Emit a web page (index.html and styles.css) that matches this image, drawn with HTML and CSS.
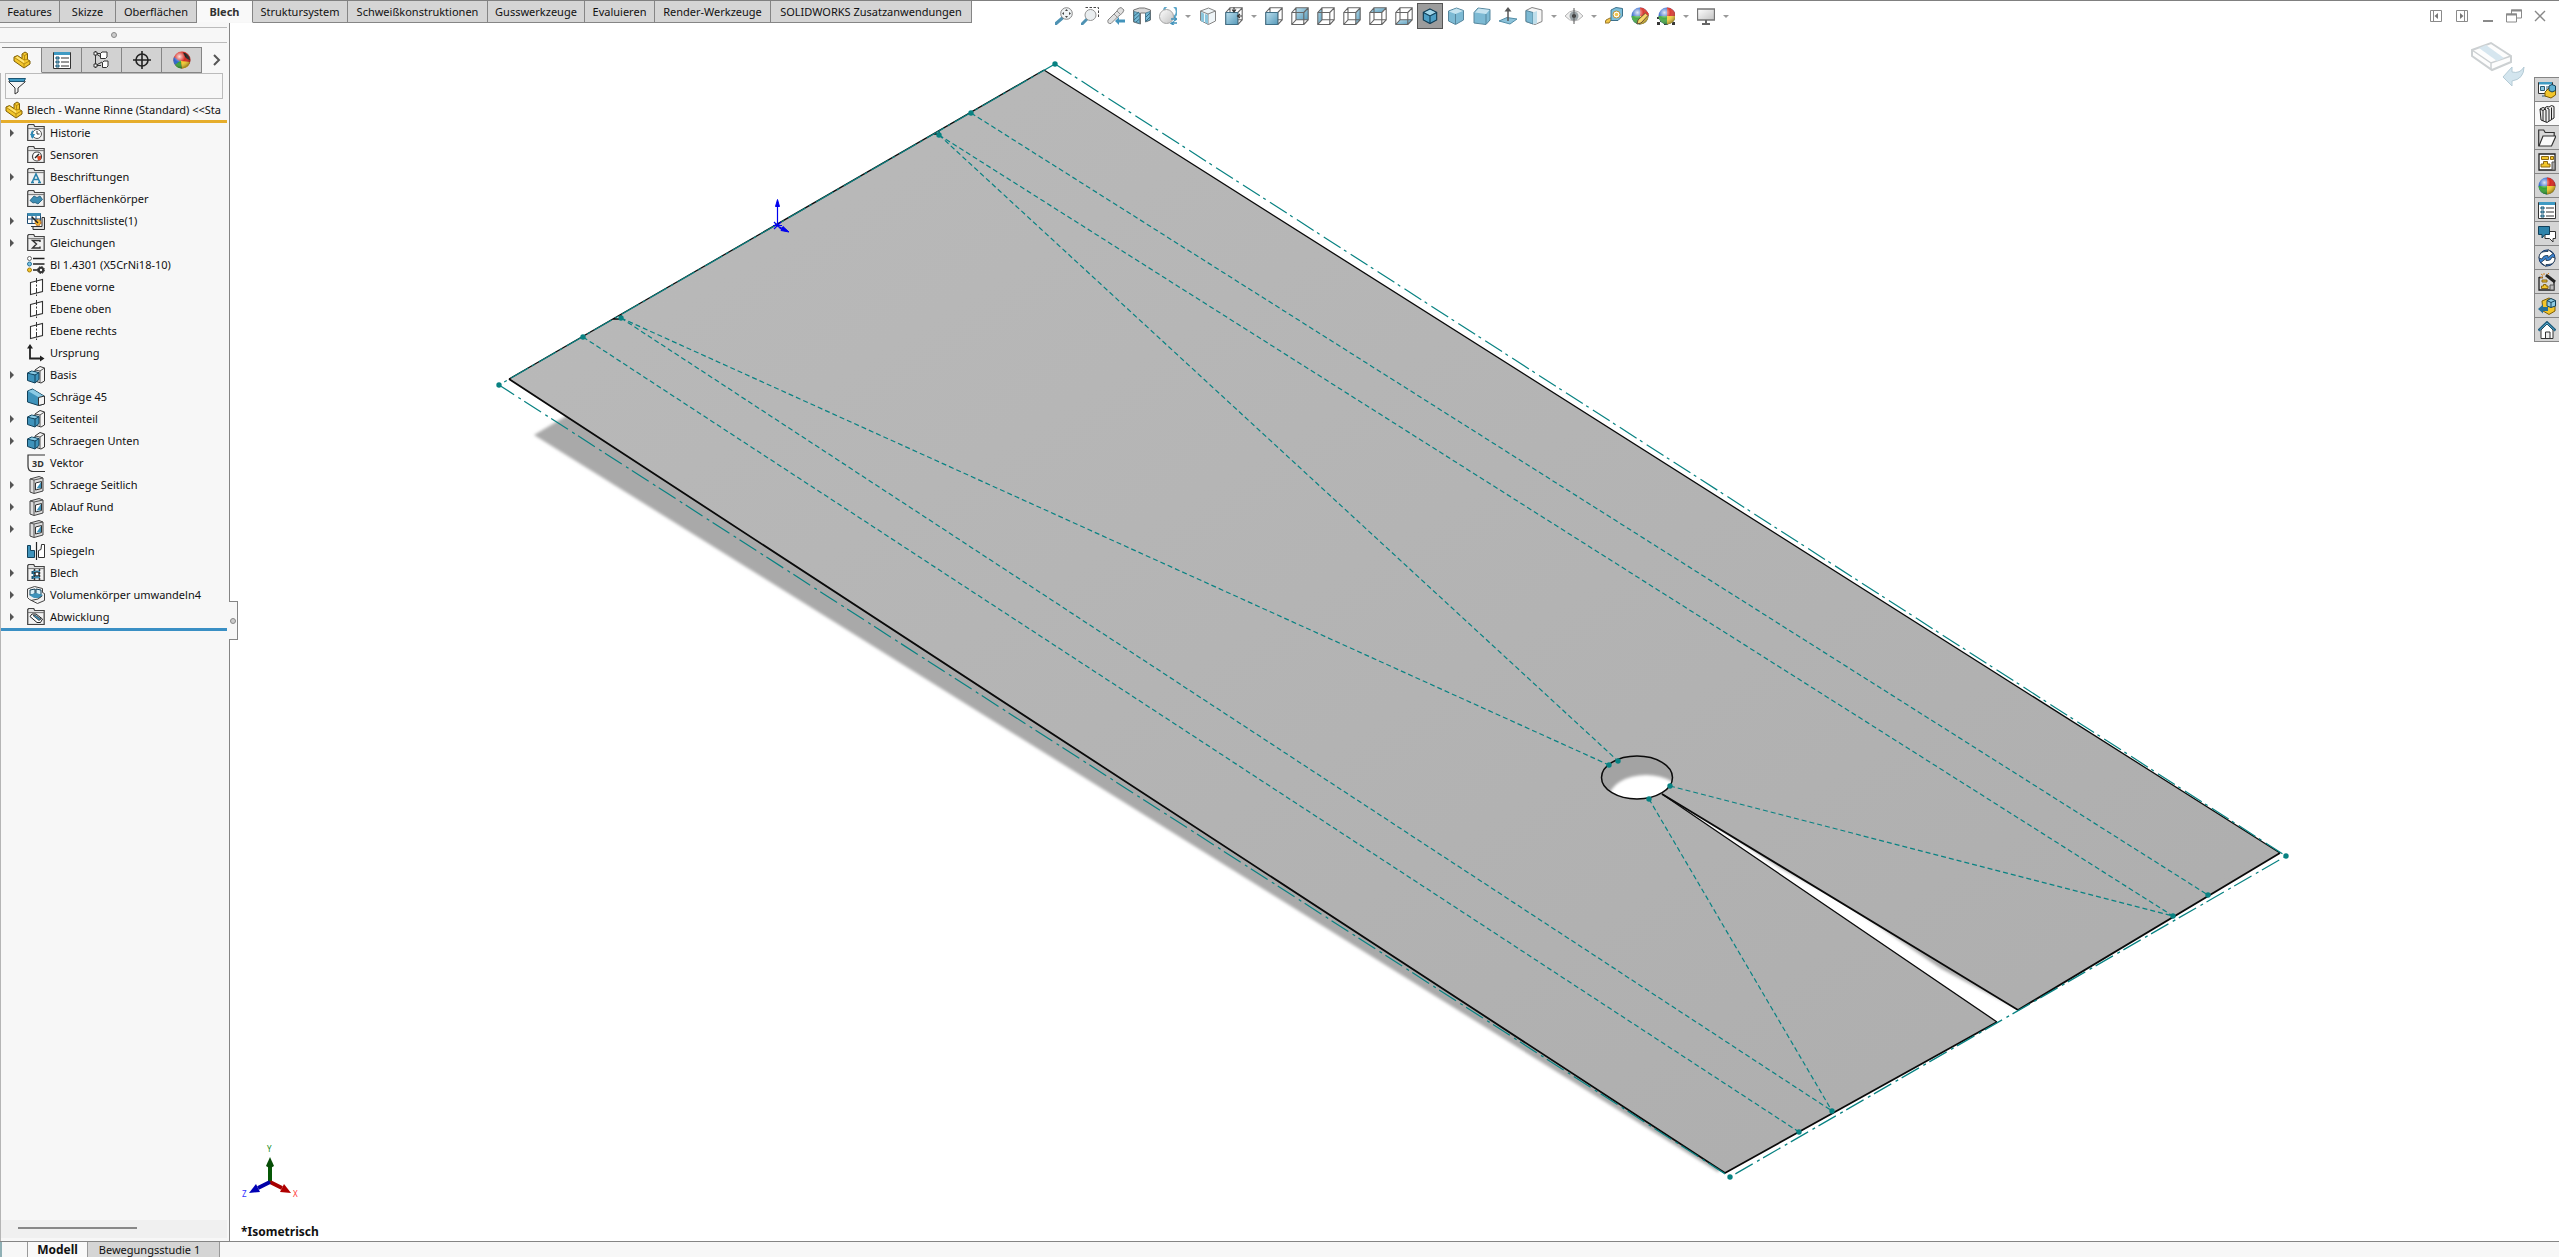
FILE: index.html
```html
<!DOCTYPE html>
<html lang="de">
<head>
<meta charset="utf-8">
<title>Blech - Wanne Rinne</title>
<link rel="stylesheet" href="styles.css">
</head>
<body>
<svg class="defs" aria-hidden="true">
  <defs>
    <linearGradient id="blue" x1="0" y1="0" x2="1" y2="1"><stop offset="0" stop-color="#b5dcec"/><stop offset="1" stop-color="#4590b4"/></linearGradient>
    <linearGradient id="grey" x1="0" y1="0" x2="1" y2="1"><stop offset="0" stop-color="#fff"/><stop offset="1" stop-color="#bbb"/></linearGradient>
    <linearGradient id="sheet" x1="0" y1="0" x2="1" y2="1"><stop offset="0" stop-color="#bababa"/><stop offset="1" stop-color="#adadad"/></linearGradient>
    <radialGradient id="shine" cx=".35" cy=".3" r=".7"><stop offset="0" stop-color="#fff" stop-opacity=".85"/><stop offset=".5" stop-color="#fff" stop-opacity="0"/><stop offset="1" stop-color="#000" stop-opacity=".35"/></radialGradient>
    <filter id="soft" x="-5%" y="-5%" width="110%" height="110%"><feGaussianBlur stdDeviation="1.5"/></filter>
    <clipPath id="holeclip"><ellipse cx="1637" cy="777.5" rx="35.5" ry="21.5"/></clipPath>
    <clipPath id="slitclip"><path d="M1662 794 2018 1010 1997 1022Z"/></clipPath>
  </defs>
  <symbol id="part" viewBox="0 0 18 18"><path d="M1 6 4.500 4.500 9 7.500V3L12 1l2.500 1.500v6L17 10v3l-6 4L1 10Z" fill="#f3c62b" stroke="#7d5d05"/><path d="M1.500 6.500 11 13l5.500-3M11 13v4M9 7.500l2.500 1.500 3-1M9 3l2.500 1.500 3-1.500M11.500 4.500V9" fill="none" stroke="#a67c0c" stroke-width=".8"/><path d="m2.500 6.500 2-1L11 10v2Z" fill="#ffe57a"/></symbol>
  <symbol id="props" viewBox="0 0 18 18"><path d="M.5 1.500h17v16H.5Z" fill="#fff" stroke="#333"/><path d="M1 1h16v3H1Z" fill="#3f9ac3"/><path d="M3 6h3v2H3Zm0 4h3v2H3Zm0 4h3v2H3Z" fill="#8cc8e0" stroke="#1c5674"/><path d="M8 7h8M8 11h8M8 15h8" stroke="#333" stroke-width="1.200"/></symbol>
  <symbol id="config" viewBox="0 0 18 18"><path d="M2.500 0v17M2.500 2.500H8M2.500 14.500H8M2.500 2.500 8 6M2.500 14.500 9 11" fill="none" stroke="#333"/><path d="M7.500 2.500 9 1h5v5l-1.500 1.500h-5ZM9.500 11.500 11 10h4v5l-1.500 1.500h-4Z" fill="#fff" stroke="#333"/><path d="M1 1h3v3H1Zm0 12h3v3H1Z" fill="#fff" stroke="#333"/></symbol>
  <symbol id="target" viewBox="0 0 18 18"><circle cx="9" cy="9" r="6" fill="none" stroke="#222" stroke-width="1.600"/><path d="M9 0v18M0 9h18" stroke="#222" stroke-width="1.600"/></symbol>
  <symbol id="ball" viewBox="0 0 18 18"><circle cx="9" cy="9" r="8.500" fill="#2c62c9"/><path d="M9 9V.5A8.500 8.500 0 0 1 17.500 9Z" fill="#d7281f"/><path d="M9 9h8.500A8.500 8.500 0 0 1 9 17.500Z" fill="#f3cb2c"/><path d="M9 9v8.500A8.500 8.500 0 0 1 .5 9Z" fill="#37a336"/><circle cx="9" cy="9" r="8.500" fill="url(#shine)"/></symbol>
  <symbol id="ballcut" viewBox="0 0 18 18"><circle cx="9" cy="9" r="8.500" fill="#d7281f"/><path d="M1 6a8.500 8.500 0 0 0 1 8l6-3Z" fill="#2c62c9"/><path d="M8 9 2 14a8.500 8.500 0 0 0 7 3.500Z" fill="#37a336"/><path d="M8 10 9 17.500A8.500 8.500 0 0 0 17 11Z" fill="#f3cb2c"/><path d="M10 1.500A8 8 0 0 1 17 9Q12 8 10 1.500Z" fill="#222"/><circle cx="9" cy="9" r="8.500" fill="url(#shine)"/></symbol>
  <symbol id="funnel" viewBox="0 0 18 18"><path d="M1 4v1l6 6v6l3-2v-4l7-6V4Z" fill="#f5f5f5" stroke="#333"/><path d="M.5 1.500h17L16 4.500H2Z" fill="#3f9ac3" stroke="#1c5674"/></symbol>
  <symbol id="folder" viewBox="0 0 18 18"><path d="M.7 16.500v-15l1-1h5l1 2h9.500v14Z" fill="#e2e2e2" stroke="#444" stroke-width="1.200"/><path d="M1 4.500h16" stroke="#666" stroke-width=".8"/><path d="M2 6h14v9H2Z" fill="#f2f2f2"/></symbol>
  <symbol id="history" viewBox="0 0 18 18"><use href="#folder"/><circle cx="10" cy="10" r="4.500" fill="#fff" stroke="#555"/><path d="M10 7v3h2.500" fill="none" stroke="#333"/><path d="M6 14A5 5 0 0 1 6 7" fill="none" stroke="#2f8bb8" stroke-width="1.800"/><path d="m3 10 3 4 2-4Z" fill="#2f8bb8"/></symbol>
  <symbol id="sensor" viewBox="0 0 18 18"><use href="#folder"/><circle cx="10" cy="10.500" r="4.500" fill="#fff" stroke="#444" stroke-width="1.200"/><path d="m10 10.500 4-1v4l-3 1Z" fill="#e04a28"/><path d="m8 12 4-4" stroke="#222" stroke-width="1.400"/></symbol>
  <symbol id="notes" viewBox="0 0 18 18"><use href="#folder"/><path d="m5 14.500 4-8.500 4 8.500M6.500 11.500h5M4 14.500h3M11 14.500h3" fill="none" stroke="#2a83ad" stroke-width="1.600"/></symbol>
  <symbol id="surfaces" viewBox="0 0 18 18"><use href="#folder"/><path d="M3 10.500 7 6l3 1.500L13 6l2.500 3.500L11 14l-3-1.500-2 .5Z" fill="#3d8db3" stroke="#1c5674" stroke-width=".8"/></symbol>
  <symbol id="cutlist" viewBox="0 0 18 18"><path d="M.5 1.500h13v10H.5Z" fill="#fff" stroke="#1e4a70"/><path d="M.5 1h13v3H.5Z" fill="#3d8db3"/><path d="M.5 7h13M5 4v8M9 4v8" stroke="#1e4a70"/><path d="M4 14.500h11v-9h2.500v12H6v-3" fill="#ddd" stroke="#333"/><circle cx="11" cy="10.500" r="3" fill="#f2b632" stroke="#b04f10" stroke-dasharray="1.500 1"/><path d="m5 5 6 6" stroke="#222" stroke-width="1.500"/></symbol>
  <symbol id="equation" viewBox="0 0 18 18"><use href="#folder"/><path d="M13 8V6.500H5.500L9.500 10l-4 4H13v-1.500" fill="none" stroke="#333" stroke-width="1.400"/></symbol>
  <symbol id="material" viewBox="0 0 18 18"><path d="M6 2.500h11.500M6 8h11.500M6 14h5" stroke="#222" stroke-width="1.600"/><circle cx="2.500" cy="2.500" r="2" fill="#fff" stroke="#666"/><circle cx="2.500" cy="8" r="2" fill="#7cc3e2" stroke="#25719a"/><circle cx="2.500" cy="14" r="2" fill="#f3c62b" stroke="#a67c0c"/><circle cx="14" cy="14" r="2.200" fill="none" stroke="#333" stroke-width="2"/><circle cx="14" cy="14" r="3.500" fill="none" stroke="#333" stroke-dasharray="1.500 1.250"/></symbol>
  <symbol id="plane" viewBox="0 0 18 18"><path d="m3.500 4.500 12-3v12l-12 3Z" fill="#fff" stroke="#333" stroke-width="1.100"/><path d="M9.500 0v18" stroke="#333" stroke-dasharray="5 1.500 2 1.500"/></symbol>
  <symbol id="origin" viewBox="0 0 18 18"><path d="M3 2v12.500h12" fill="none" stroke="#222" stroke-width="1.800"/><path d="M0 4.500 3 0l3 4.500ZM13 11.500l4.500 3-4.500 3Z" fill="#222"/></symbol>
  <symbol id="extrude" viewBox="0 0 18 18"><path d="m8 4 5-3.500 4.500 1.500v13L14 17 8 15Z" fill="#f4f4f4" stroke="#333"/><path d="m8 4 5 1 4.500-3M13 5v11" fill="none" stroke="#555"/><path d="m.5 7 4-2 7.500 1.500v7L8 17 .5 14.500Z" fill="#3f93bb" stroke="#12415a"/><path d="M.5 7 8 9l4-2.500M8 9v8" fill="none" stroke="#12415a"/><path d="m2 7 3-1.500L10.500 7 8 8.300Z" fill="#8fcbe3"/></symbol>
  <symbol id="bevel" viewBox="0 0 18 18"><path d="m.5 3 5-2L17 8v8l-5.500 1.500L.5 14Z" fill="#3f93bb" stroke="#12415a"/><path d="m1 3 5-1.500L16.500 8 12 9.500Z" fill="#8ccbe5"/><path d="M11.500 9.500 17.500 8v8l-6 1.500Z" fill="#f4f4f4" stroke="#333"/></symbol>
  <symbol id="cut" viewBox="0 0 18 18"><path d="m3 3 9-2.500 4 1.500v13L7 17.500 3 16Z" fill="#ddd" stroke="#444"/><path d="M3 3l4 1 9-2M7 4v13" fill="none" stroke="#555"/><path d="m8.500 7 6-1.500v7l-6 1.500Z" fill="#fff" stroke="#333"/><path d="M9.500 12.500 14 6v6Z" fill="#3f93bb"/></symbol>
  <symbol id="mirror" viewBox="0 0 18 18"><path d="M.5 3.500h3v5h4v7h-7Z" fill="#3f93bb" stroke="#12415a"/><path d="M9.500 0v18" stroke="#222" stroke-width="1.200"/><path d="M17.500 2.500h-3l-.5 5-2.500 1v7h6Z" fill="#fff" stroke="#333"/></symbol>
  <symbol id="metal" viewBox="0 0 18 18"><use href="#folder"/><path d="M6 6.500h7v8H6Z" fill="#3f93bb"/><path d="M7.500 5v11M12.500 5v11" stroke="#333" stroke-width="1.500" stroke-dasharray="2 1"/><circle cx="10" cy="10" r="2" fill="#fff" stroke="#222"/><path d="M4.500 7h2v3h-2Zm0 5h2v3h-2Z" fill="#1c5674"/></symbol>
  <symbol id="convert" viewBox="0 0 18 18"><path d="m.5 3 7-2.500 8 2v4l2 1v7l-7 3-8-4-2-2Z" fill="#f0f0f0" stroke="#444"/><path d="m3 4 5-1v5L3 9Zm6-1 5 1v5L9 8Z" fill="#d9eef6" stroke="#12415a"/><path d="m2 9 7-2 7 2-3 3H7Z" fill="#3f93bb"/><path d="M4 14.500 11 13l4-3" fill="none" stroke="#444"/></symbol>
  <symbol id="flat" viewBox="0 0 18 18"><use href="#folder"/><path d="m3 8.500 2-2.500h4l6.500 5-2 3.500H10Z" fill="#fff" stroke="#222"/><path d="m6 7.500 6 5 2-1.500-6-4Z" fill="#3f93bb" stroke="#222" stroke-width=".7"/></symbol>

  <symbol id="zfit" viewBox="0 0 18 18"><path d="m1 16.500 7-6" stroke="#3b87ab" stroke-width="3.200" stroke-linecap="round"/><circle cx="11.500" cy="6.500" r="5.800" fill="#eef2f4" stroke="#777"/><path d="m11.500 2 1.500 2h-3Zm0 9 1.500-2h-3ZM7 6.500l2-1.500v3Zm9 0-2-1.500v3Z" fill="#333"/></symbol>
  <symbol id="zarea" viewBox="0 0 18 18"><path d="M4.500.5h13v11" fill="none" stroke="#333" stroke-dasharray="2.500 1.500"/><path d="m1 17 5-5" stroke="#3b87ab" stroke-width="3" stroke-linecap="round"/><circle cx="9.500" cy="8" r="5.500" fill="#e8edef" stroke="#888"/></symbol>
  <symbol id="prev" viewBox="0 0 18 18"><path d="m1 13 9-9 1.500-2.500L14 .5 17 3l-1.500 3-5 4L4 16.500Q0 17 1 13Z" fill="#ddd" stroke="#777"/><path d="m10 4 4 4M7 7l4 4" stroke="#888"/><path d="m8 14 4-4v2.500h6v3h-6V18Z" fill="#2e88b4"/></symbol>
  <symbol id="section" viewBox="0 0 18 18"><path d="m.5 3 6-2 5 0 6 2v10l-5 2V6h-5v11l-7-2Z" fill="#d5d5d5" stroke="#666"/><path d="M1 4.500 6.500 6v10.500L1 14.500ZM12.500 6l4.500-1.500V13l-4.500 1.500Z" fill="#63b2d2" stroke="#275d77" stroke-width=".7"/><path d="m1 9 5-4M1 13l5.500-5M3 15l3.500-3M13 10l4-4M13 14l4-4" stroke="#275d77"/></symbol>
  <symbol id="style" viewBox="0 0 18 18"><path d="M5 3a6.500 6.500 0 1 1 10 7" fill="none" stroke="#4b9ec4" stroke-width="2"/><circle cx="7.500" cy="9.500" r="7" fill="url(#grey)" stroke="#999"/><path d="M12 12h6M15 10l3 2-3 2M18 16h-6M15 14.500 12 16.500l3 1.500" fill="none" stroke="#2e88b4" stroke-width="1.300"/></symbol>
  <symbol id="orient" viewBox="0 0 18 18"><path d="m1.500 4 8-3 7 3v10l-7 3.500-8-4Z" fill="#eef5f8" stroke="#777"/><path d="M1.500 4 9 7l7.500-3M9 7v10.500" fill="none" stroke="#777"/><path d="m2 5 3 1.500v9L2 14Zm4 2 3 1v9l-3-1.500Z" fill="#7fbfd9"/></symbol>
  <symbol id="wire" viewBox="0 0 18 18"><path d="M.8 5.500h12v12H.8ZM5 .8h12.200v12H5ZM.8 5.500 5 .8M12.800 5.500 17.200.8M12.800 17.500l4.400-4.700M.8 17.500 5 12.800" fill="none" stroke="#555" stroke-width="1.100"/></symbol>
  <symbol id="vfront" viewBox="0 0 18 18"><use href="#wire"/><path d="M.8 5.500h12v12H.8Z" fill="url(#blue)" stroke="#2b607a"/></symbol>
  <symbol id="vback" viewBox="0 0 18 18"><path d="M5 .8h12.200v12H5Z" fill="url(#blue)"/><use href="#wire"/></symbol>
  <symbol id="vleft" viewBox="0 0 18 18"><path d="M.8 5.500 5 .8v12L.8 17.500Z" fill="url(#blue)"/><use href="#wire"/></symbol>
  <symbol id="vright" viewBox="0 0 18 18"><path d="M12.800 5.500 17.200.8v12l-4.400 4.700Z" fill="url(#blue)"/><use href="#wire"/></symbol>
  <symbol id="vtop" viewBox="0 0 18 18"><path d="M.8 5.500 5 .8h12.200l-4.400 4.700Z" fill="url(#blue)"/><use href="#wire"/></symbol>
  <symbol id="vbottom" viewBox="0 0 18 18"><path d="M.8 17.500 5 12.800h12.200l-4.400 4.700Z" fill="url(#blue)"/><use href="#wire"/></symbol>
  <symbol id="viewsel" viewBox="0 0 18 18"><use href="#vfront"/><path d="M9 4V.5M7 2.500 9 5l2-2.500M17 9h-4M15 7l-2.500 2 2.500 2" fill="none" stroke="#222" stroke-width="1.200"/></symbol>
  <symbol id="iso" viewBox="0 0 18 18"><path d="m9 1 7.500 4v8.500L9 17.500l-7.500-4V5Z" fill="#4d9fc5" stroke="#0f3d55" stroke-width="1.300"/><path d="m9 2 6.500 3L9 8.500 2.500 5Z" fill="#a4d7ea"/><path d="M1.500 5 9 9l7.500-4M9 9v8" fill="none" stroke="#0f3d55" stroke-width="1.200"/></symbol>
  <symbol id="dim" viewBox="0 0 18 18"><path d="m1.500 4 8-3 7 2.500V13L8.500 17.500l-7-3.500Z" fill="#6fb3d0" stroke="#457a93"/><path d="m2 4.500 7.500-3L16 4 8.500 7Z" fill="#c0e1ee"/><path d="M8.500 7v10" stroke="#457a93"/></symbol>
  <symbol id="tri" viewBox="0 0 18 18"><path d="m1 5.500 4-4.500L17 2.500V13l-4 4.500L1 16Z" fill="#6fb3d0" stroke="#457a93"/><path d="m2 5.500 3.500-4 11 1.500L13 7Z" fill="#c0e1ee"/><path d="M13 7v10" stroke="#457a93"/></symbol>
  <symbol id="normal" viewBox="0 0 18 18"><path d="m0 14 8-3.500L18 12l-7 5Z" fill="#7fbcd6" stroke="#40819e"/><path d="M9 14V3" stroke="#444" stroke-width="1.500"/><path d="M5.500 4.500 9 0l3.500 4.500Z" fill="#444"/></symbol>
  <symbol id="clipview" viewBox="0 0 18 18"><path d="m1 3.500 6-3L17 3v11.500l-7 3-9-3Z" fill="#f4f4f4" stroke="#777"/><path d="m1 3.500 7 2V17l-7-2.500Z" fill="#6fb3d0" stroke="#457a93"/><path d="M8 5.500 12 4v12.500L8 17Z" fill="#b8dbe9"/></symbol>
  <symbol id="eye" viewBox="0 0 18 18"><path d="M0 9q9-11 18 0-9 10-18 0Z" fill="#eee" stroke="#aaa"/><circle cx="9" cy="9" r="4.500" fill="#8e989d"/><circle cx="9" cy="9" r="2" fill="#222"/><path d="M9 1v16" stroke="#444"/></symbol>
  <symbol id="tape" viewBox="0 0 18 18"><path d="m0 16 1-3 4-2h4v2H6l-2 3Z" fill="#f2c137" stroke="#8b6714"/><path d="m6 3 5-2.500 6.500 1V9L13 13.500H6Z" fill="#6fb9d8" stroke="#27627f"/><circle cx="11.500" cy="7.500" r="3.500" fill="#fff" stroke="#b5851b"/><circle cx="11.500" cy="7.500" r="1.800" fill="#f2c137"/></symbol>
  <symbol id="appear" viewBox="0 0 18 18"><svg width="16" height="16" viewBox="0 0 18 18"><use href="#ball"/></svg><path d="m6 17 1-4 7.500-7 2.500 2.500-7 7.500Z" fill="#f7d35b" stroke="#5a3b1d"/><path d="m14.500 6 1.500-1.500L18 7l-1 1.500Z" fill="#d7281f"/></symbol>
  <symbol id="scene" viewBox="0 0 18 18"><path d="M0 10h18v8H0Z" fill="#222"/><path d="M0 12h3v3H0Zm3 3h4v3H3Zm8 0h4v3h-4Zm4-3h3v3h-3Zm-8 0h4v3H7Z" fill="#fff"/><svg x="1" width="16" height="16" viewBox="0 0 18 18"><use href="#ball"/></svg></symbol>
  <symbol id="screen" viewBox="0 0 18 18"><path d="M.5 2h17v11H.5Z" fill="url(#grey)" stroke="#666" stroke-width="1.300"/><path d="M9 13v4M5 17h8" stroke="#555" stroke-width="2"/></symbol>

  <symbol id="wleft" viewBox="0 0 12 12"><path d="M.5.5h11v11H.5ZM3.500.5v11" fill="none" stroke="#8a8a8a"/><path d="M8 3v6L4.500 6Z" fill="#777"/></symbol>
  <symbol id="wright" viewBox="0 0 12 12"><path d="M.5.5h11v11H.5ZM8.500.5v11" fill="none" stroke="#8a8a8a"/><path d="M4 3v6l3.500-3Z" fill="#777"/></symbol>
  <symbol id="wmin" viewBox="0 0 12 12"><path d="M1 11h10" stroke="#8a8a8a" stroke-width="2"/></symbol>
  <symbol id="wrest" viewBox="0 0 16 14"><path d="M.5 5h10v8H.5ZM5.500 5V1h10v8h-5" fill="none" stroke="#8a8a8a"/><path d="M5 1.500h11M0 5.500h11" stroke="#8a8a8a" stroke-width="2"/></symbol>
  <symbol id="wclose" viewBox="0 0 12 12"><path d="m1 1 10 10M11 1 1 11" stroke="#888" stroke-width="1.400"/></symbol>

  <symbol id="tres" viewBox="0 0 18 18"><path d="M.5 1.500h14v11H.5Z" fill="#fff" stroke="#333"/><path d="M1 1h13v2.500H1Z" fill="#3f9ac3"/><path d="M2.500 5.500h4v4h-4ZM8 6h5M8 8h4M4 15h6" fill="#8cc8e0" stroke="#2c5b75"/><path d="m7 11 5-5 5.500 1v7L13 17l-6-2Z" fill="#f3c62b" stroke="#7d5d05"/><path d="m11 5 3-1.500L17.500 5v4.500L14 11l-3-1.500Z" fill="#63b2d2" stroke="#12415a"/></symbol>
  <symbol id="books" viewBox="0 0 18 18"><path d="m2 4 3-1.500L6.500 3 9 1.500l2 .5L13.500.5 16 1.500V13l-7 4.500L3 15Z" fill="#eee" stroke="#222"/><path d="m2 4 3 1.500v10.500M5 5.500l3-2v0M8 5v12M8 5 6 3.500M11 4v12M11 4 9 3M13.500 2.500v12" fill="none" stroke="#222"/></symbol>
  <symbol id="open" viewBox="0 0 18 18"><path d="M.7 17V1h5l1.500 2.500h9V7" fill="#d9d9d9" stroke="#333" stroke-width="1.200"/><path d="m1 17 4-10h13l-4.500 10Z" fill="#fafafa" stroke="#333" stroke-width="1.200"/></symbol>
  <symbol id="palette" viewBox="0 0 18 18"><path d="M1 1h16v16H1Z" fill="#fff" stroke="#222" stroke-width="1.300"/><path d="M3.500 3.500h7v3h-7ZM12.500 3.500h3v3h-3ZM5.500 8.500h4v2.500H12v3H3V11h2.500Z" fill="#f3c62b" stroke="#8b6714"/><path d="M14 9h3v8h-3Z" fill="#aaa" stroke="#555"/></symbol>
  <symbol id="chat" viewBox="0 0 18 18"><path d="M7 6.500h10.500v7H15v3.500l-3.500-3.500H7Z" fill="#fff" stroke="#333"/><path d="M.5 1.500h11v8H7L4 13V9.500H.5Z" fill="#2f84ab" stroke="#12415a"/></symbol>
  <symbol id="sync" viewBox="0 0 18 18"><circle cx="9" cy="9" r="8" fill="#3b83cf" stroke="#173b70"/><path d="M1 9Q1 2.500 8 2.500h2V.5l5 4-5 4v-2H8Q5 6.500 4 10ZM17 9q0 6.500-7 6.500H8v2l-5-4 5-4v2h2q3 0 4-3.500Z" fill="#fff" stroke="#234" stroke-width=".8"/></symbol>
  <symbol id="wand" viewBox="0 0 18 18"><path d="M1 4.500h4M1 4v13h15V9" fill="none" stroke="#222" stroke-width="1.300"/><path d="M4 7h5v2H4ZM5.500 11.500H8V13h2v2.500H3.500V13h2Z" fill="#f3c62b" stroke="#8b6714"/><path d="m8 2 9 7" stroke="#222" stroke-width="3"/><path d="m3 1 2 1.500M6 0v2M11 0 9.500 1.500M2 5l3-1" stroke="#cf8120"/><path d="M12 12h4v5h-4Z" fill="#bbb" stroke="#555"/></symbol>
  <symbol id="export" viewBox="0 0 18 18"><path d="m4 4 7-3 6 3v10l-6 3.500L5 14Z" fill="#f3c62b" stroke="#7d5d05"/><path d="m9 3.500 4-2 4.500 2V9L13 10.500 9 9Z" fill="#8fcbe3" stroke="#12415a"/><path d="M9 3.500 13 5.500l4.500-2M13 5.500v5" fill="none" stroke="#12415a"/><path d="m0 12 5-4.500V10h5v4H5v2.500Z" fill="#256f97"/></symbol>
  <symbol id="home" viewBox="0 0 18 18"><path d="M3 9v8.500h12V9L9 3Z" fill="#fff" stroke="#333"/><path d="M7.500 17v-6H12v6" fill="#eee" stroke="#333"/><path d="m.5 9.500 8.500-8 8.500 8" fill="none" stroke="#1b5b7c" stroke-width="2.600"/><path d="m1.500 9 7.500-7 7.500 7" fill="none" stroke="#59acd0"/></symbol>
</svg>

<header class="top">
  <nav class="commands" aria-label="Befehle">
    <button>Features</button><button>Skizze</button><button>Oberflächen</button><button class="on">Blech</button><button>Struktursystem</button><button>Schweißkonstruktionen</button><button>Gusswerkzeuge</button><button>Evaluieren</button><button>Render-Werkzeuge</button><button>SOLIDWORKS Zusatzanwendungen</button>
  </nav>
  <div class="hud">
    <button aria-label="In Fenster zoomen"><svg><use href="#zfit"/></svg></button>
    <button aria-label="Ausschnitt vergrößern"><svg><use href="#zarea"/></svg></button>
    <button aria-label="Vorherige Ansicht"><svg><use href="#prev"/></svg></button>
    <button aria-label="Schnittansicht"><svg><use href="#section"/></svg></button>
    <button aria-label="Ansichtsstil"><svg><use href="#style"/></svg></button><i class="caret"></i>
    <button aria-label="Ausrichtung"><svg><use href="#orient"/></svg></button>
    <button aria-label="Ansichtsauswahl"><svg><use href="#viewsel"/></svg></button><i class="caret"></i>
    <button aria-label="Vorne"><svg><use href="#vfront"/></svg></button>
    <button aria-label="Hinten"><svg><use href="#vback"/></svg></button>
    <button aria-label="Links"><svg><use href="#vleft"/></svg></button>
    <button aria-label="Rechts"><svg><use href="#vright"/></svg></button>
    <button aria-label="Oben"><svg><use href="#vtop"/></svg></button>
    <button aria-label="Unten"><svg><use href="#vbottom"/></svg></button>
    <button aria-label="Isometrisch" class="on"><svg><use href="#iso"/></svg></button>
    <button aria-label="Dimetrisch"><svg><use href="#dim"/></svg></button>
    <button aria-label="Trimetrisch"><svg><use href="#tri"/></svg></button>
    <button aria-label="Normal auf"><svg><use href="#normal"/></svg></button>
    <button aria-label="Bildanzeige"><svg><use href="#clipview"/></svg></button><i class="caret"></i>
    <button aria-label="Ausblenden"><svg><use href="#eye"/></svg></button><i class="caret"></i>
    <button aria-label="Messen"><svg><use href="#tape"/></svg></button>
    <button aria-label="Erscheinungsbild"><svg><use href="#appear"/></svg></button>
    <button aria-label="Bühne"><svg><use href="#scene"/></svg></button><i class="caret"></i>
    <button aria-label="Anzeige"><svg><use href="#screen"/></svg></button><i class="caret"></i>
  </div>
  <div class="window">
    <button aria-label="Links andocken"><svg><use href="#wleft"/></svg></button>
    <button aria-label="Rechts andocken"><svg><use href="#wright"/></svg></button>
    <button aria-label="Minimieren"><svg><use href="#wmin"/></svg></button>
    <button aria-label="Wiederherstellen"><svg class="wide"><use href="#wrest"/></svg></button>
    <button aria-label="Schließen"><svg><use href="#wclose"/></svg></button>
  </div>
</header>

<main class="work">
  <aside class="side">
    <div class="grip"><i class="dot"></i></div>
    <div class="managers">
      <button class="on" aria-label="FeatureManager"><svg><use href="#part"/></svg></button>
      <button aria-label="PropertyManager"><svg><use href="#props"/></svg></button>
      <button aria-label="ConfigurationManager"><svg><use href="#config"/></svg></button>
      <button aria-label="DimXpertManager"><svg><use href="#target"/></svg></button>
      <button aria-label="DisplayManager"><svg><use href="#ballcut"/></svg></button>
      <button class="more" aria-label="Mehr"><svg viewBox="0 0 18 18"><path d="m9 4 5 5-5 5" fill="none" stroke="#555" stroke-width="2"/></svg></button>
    </div>
    <div class="panel">
      <label class="filter"><svg><use href="#funnel"/></svg><input type="text" aria-label="Filter"></label>
      <div class="root"><svg><use href="#part"/></svg><span>Blech - Wanne Rinne (Standard) &lt;&lt;Sta</span></div>
      <ul class="tree">
        <li class="kids"><svg><use href="#history"/></svg>Historie</li>
        <li><svg><use href="#sensor"/></svg>Sensoren</li>
        <li class="kids"><svg><use href="#notes"/></svg>Beschriftungen</li>
        <li><svg><use href="#surfaces"/></svg>Oberflächenkörper</li>
        <li class="kids"><svg><use href="#cutlist"/></svg>Zuschnittsliste(1)</li>
        <li class="kids"><svg><use href="#equation"/></svg>Gleichungen</li>
        <li><svg><use href="#material"/></svg>Bl 1.4301 (X5CrNi18-10)</li>
        <li><svg><use href="#plane"/></svg>Ebene vorne</li>
        <li><svg><use href="#plane"/></svg>Ebene oben</li>
        <li><svg><use href="#plane"/></svg>Ebene rechts</li>
        <li><svg><use href="#origin"/></svg>Ursprung</li>
        <li class="kids"><svg><use href="#extrude"/></svg>Basis</li>
        <li><svg><use href="#bevel"/></svg>Schräge 45</li>
        <li class="kids"><svg><use href="#extrude"/></svg>Seitenteil</li>
        <li class="kids"><svg><use href="#extrude"/></svg>Schraegen Unten</li>
        <li><svg viewBox="0 0 18 18"><path d="M18 1H1v11q0 5.500 5 5.500h12" fill="none" stroke="#333" stroke-width="1.200"/><text x="5" y="13" class="tiny">3D</text></svg>Vektor</li>
        <li class="kids"><svg><use href="#cut"/></svg>Schraege Seitlich</li>
        <li class="kids"><svg><use href="#cut"/></svg>Ablauf Rund</li>
        <li class="kids"><svg><use href="#cut"/></svg>Ecke</li>
        <li><svg><use href="#mirror"/></svg>Spiegeln</li>
        <li class="kids"><svg><use href="#metal"/></svg>Blech</li>
        <li class="kids"><svg><use href="#convert"/></svg>Volumenkörper umwandeln4</li>
        <li class="kids"><svg><use href="#flat"/></svg>Abwicklung</li>
      </ul>
      <div class="scroll"><i></i></div>
    </div>
    <div class="splitter"><i class="dot"></i></div>
  </aside>

  <section class="view">
    <svg class="model" viewBox="230 23 2329 1218" preserveAspectRatio="xMidYMid meet" role="img" aria-label="Abwicklung des Blechs">
      <path d="M568 415 534 435 1718 1172 1730 1160 620 420Z" fill="#a9a9a9" filter="url(#soft)"/>
      <path fill-rule="evenodd" d="M509 379 613 319 621 319V315L934 134H939V130L1044 70 2280 853 2018 1010 1662 794 1997 1022 1725 1173ZM1601.500 777.500a35.500 21.500 0 1 0 71 0a35.500 21.500 0 1 0-71 0Z" fill="url(#sheet)"/>
      <g clip-path="url(#holeclip)"><path d="M1601 756h72v44h-72Z" fill="#a3a3a3"/><ellipse cx="1646" cy="798" rx="37" ry="23" fill="#fff" filter="url(#soft)"/></g>
      <g clip-path="url(#slitclip)"><path d="M1660 790 2019 1010 1940 968 1840 900 1780 868Z" fill="#a5a5a5" filter="url(#soft)"/></g>
      <g fill="none" stroke="#0a0a0a">
        <path d="M1044 70 509 379M613 319h8v-4M934 134h5v-4" stroke-width="1.300"/>
        <path d="M1044 70 2280 853M1662 794 1997 1022" stroke-width="1.300"/>
        <path d="M509 379 1725 1173 1997 1022M2280 853 2018 1010 1662 794" stroke-width="1.800"/>
        <ellipse cx="1637" cy="777.500" rx="35.500" ry="21.500" stroke-width="1.500"/>
      </g>
      <g fill="none" stroke="#088282" stroke-width="1.200">
        <path d="M1055 64 499 385 1730 1177 2286 856Z" stroke-dasharray="20 5 3 4"/>
        <path d="M971 113 2208 895M939 135 2173 916M939 135 1618 761M621 318 1609 765M621 318 1832 1111M583 337 1799 1132M1670 786 2173 916M1649 799 1832 1111" stroke-dasharray="5 3"/>
      </g>
      <g fill="#088282">
        <circle cx="1055" cy="64" r="2.700"/><circle cx="971" cy="113" r="2.700"/><circle cx="939" cy="135" r="2.700"/><circle cx="621" cy="318" r="2.700"/><circle cx="583" cy="337" r="2.700"/><circle cx="499" cy="385" r="2.700"/><circle cx="1609" cy="765" r="2.700"/><circle cx="1618" cy="761" r="2.700"/><circle cx="1670" cy="786" r="2.700"/><circle cx="1649" cy="799" r="2.700"/><circle cx="2286" cy="856" r="2.700"/><circle cx="2208" cy="895" r="2.700"/><circle cx="2173" cy="916" r="2.700"/><circle cx="1832" cy="1111" r="2.700"/><circle cx="1799" cy="1132" r="2.700"/><circle cx="1730" cy="1177" r="2.700"/>
      </g>
      <g stroke="#00e" fill="#00e"><path d="M777.500 226v-20M777.500 226l6 3M774 222l7 7M781 222l-7 7M773 225.500h9" stroke-width="1.200"/><path d="m777.500 199.500 2 7h-4ZM783 226.500l6 5.500-8-1.500Z"/></g>
    </svg>
    <svg class="corner" viewBox="0 0 54 46" aria-hidden="true"><path d="M1 9 20 2l20 13v6L21 29 1 15Z" fill="#fdfdfd" stroke="#ccd0d2" stroke-width="2"/><path d="M1 9 20 22l20-7M20 22v6" fill="none" stroke="#ccd0d2" stroke-width="1.500"/><path d="m8 7 7-3 18 13-7 3Z" fill="#d6e6ef"/><path d="m32 36 9-10v5q8 2 12-5 0 12-12 14v5Z" fill="#d3e5ee" stroke="#b5cbd6"/></svg>
    <svg class="triad" viewBox="0 0 56 56" aria-hidden="true"><path d="M28 39V20" stroke="#075807" stroke-width="4"/><path d="m24 23 4-9 4 9q-4 3-8 0Z" fill="#064d06"/><path d="m28 39 12 6" stroke="#a60000" stroke-width="4"/><path d="m38 49 4-8 7 9Z" fill="#b00000"/><path d="m28 39-12 6" stroke="#0000a8" stroke-width="4"/><path d="m18 49-4-8-7 9Z" fill="#0000b5"/><text x="25" y="9" fill="#168a16">Y</text><text x="51" y="54" fill="#f33">X</text><text x="0" y="54" fill="#33f">Z</text></svg>
    <span class="name">*Isometrisch</span>
    <nav class="pane" aria-label="Task-Fensterbereich">
      <button aria-label="Ressourcen"><svg><use href="#tres"/></svg></button>
      <button aria-label="Konstruktionsbibliothek" class="on"><svg><use href="#books"/></svg></button>
      <button aria-label="Datei-Explorer"><svg><use href="#open"/></svg></button>
      <button aria-label="Ansichtspalette"><svg><use href="#palette"/></svg></button>
      <button aria-label="Erscheinungsbilder"><svg><use href="#ball"/></svg></button>
      <button aria-label="Eigenschaften"><svg><use href="#props"/></svg></button>
      <button aria-label="Forum"><svg><use href="#chat"/></svg></button>
      <button aria-label="Aktualisieren"><svg><use href="#sync"/></svg></button>
      <button aria-label="Assistent"><svg><use href="#wand"/></svg></button>
      <button aria-label="Exportieren"><svg><use href="#export"/></svg></button>
      <button aria-label="Startseite"><svg><use href="#home"/></svg></button>
    </nav>
  </section>
</main>

<footer class="bottom">
  <i class="edge"></i>
  <button class="on">Modell</button><button>Bewegungsstudie 1</button>
</footer>
</body>
</html>
```
FILE: styles.css
```css
* { box-sizing: border-box; }
body {
  margin: 0;
  min-height: 100vh;
  display: grid;
  grid-template-rows: 23px 1fr 16px;
  background: #fff;
  color: #111;
  font: 11px/16px "Noto Sans", "Open Sans", sans-serif;
  overflow: hidden;
}
.defs { position: absolute; width: 0; height: 0; }
button {
  margin: 0;
  padding: 0;
  border: 0;
  background: none;
  color: inherit;
  font: inherit;
  white-space: nowrap;
}
svg { width: 18px; height: 18px; display: block; flex: none; }
.tiny { font: bold 9px "Noto Sans", sans-serif; fill: #333; }

.top {
  display: flex;
  align-items: flex-start;
  border-top: 1px solid #808080;
  position: relative;
  z-index: 1;
}
.commands {
  display: grid;
  grid-template-columns: 60px 56px 81px 56px 95px 140px 97px 70px 116px 201px;
  height: 22px;
}
.commands button {
  background: #d5d5d5;
  border-right: 1px solid #858585;
  border-bottom: 1px solid #858585;
}
.commands .on { background: #f9f9f9; font-weight: bold; color: #333; border-bottom-color: #f7f7f7; }
.hud { display: flex; margin-left: 79px; padding-top: 2px; }
.hud button { width: 26px; height: 26px; display: grid; place-items: center; opacity: .9; }
.hud .on { background: #9c9c9c; border: 1px solid #555; opacity: 1; }
.hud .on svg { width: 16px; height: 16px; }
.caret { width: 14px; height: 26px; display: grid; place-items: center; }
.caret::before { content: ""; border: 3px solid transparent; border-top-color: #999; border-bottom: 0; }
.window { display: flex; margin-left: auto; padding: 2px 6px 0 0; }
.window button { width: 26px; height: 26px; display: grid; place-items: center; }
.window svg { width: 12px; height: 12px; }
.window .wide { width: 16px; height: 14px; }

.work { display: grid; grid-template-columns: 230px 1fr; min-height: 0; }
.side {
  position: relative;
  display: flex;
  flex-direction: column;
  min-width: 0;
  padding-right: 2px;
  background: #f7f7f7;
  border-right: 1px solid #858585;
}
.grip {
  height: 16px;
  margin-top: 4px;
  display: grid;
  place-items: center;
  border-top: 1px solid #bbb;
  border-bottom: 1px solid #bbb;
}
.dot { width: 6px; height: 6px; border: 1px solid #888; border-radius: 50%; background: #ccc; }
.managers { display: flex; margin: 4px 0 0 2px; height: 26px; }
.managers button {
  width: 40px;
  display: grid;
  place-items: center;
  background: #d2d2d2;
  border: 1px solid #858585;
  border-left: 0;
}
.managers .on { background: #f7f7f7; border-bottom-color: #f7f7f7; }
.managers .more { width: 25px; background: none; border-color: transparent; }
.panel { flex: 1; display: flex; flex-direction: column; border-left: 1px solid #b5b5b5; min-height: 0; }
.filter {
  display: flex;
  align-items: center;
  height: 26px;
  margin: 0 4px;
  padding-left: 2px;
  border: 1px solid #bbb;
}
.filter input { flex: 1; min-width: 0; border: 0; outline: 0; background: none; font: inherit; }
.root {
  display: flex;
  align-items: center;
  gap: 4px;
  height: 24px;
  padding-left: 4px;
  border-bottom: 3px solid #e6ad2b;
  white-space: nowrap;
}
.tree { list-style: none; margin: -1px 0 0; padding: 0; border-bottom: 3px solid #3a8fc4; }
.tree li {
  display: flex;
  align-items: center;
  gap: 5px;
  height: 22px;
  padding-left: 26px;
  white-space: nowrap;
}
.tree .kids { padding-left: 9px; }
.tree .kids::before {
  content: "";
  width: 12px;
  height: 8px;
  background: #555;
  clip-path: polygon(0 0, 4px 4px, 0 8px);
}
.scroll { height: 18px; margin-top: auto; margin-bottom: 3px; padding: 7px 17px; background: #f0f0f0; }
.scroll i { display: block; width: 119px; height: 2px; background: #888; }
.splitter {
  position: absolute;
  left: 100%;
  top: 578px;
  width: 9px;
  height: 39px;
  display: grid;
  place-items: center;
  background: #f7f7f7;
  border: 1px solid #858585;
  border-left: 0;
  z-index: 1;
}

.view { position: relative; min-width: 0; min-height: 0; }
.model { position: absolute; inset: 0; width: 100%; height: 100%; }
.corner { position: absolute; top: 18px; right: 34px; width: 54px; height: 46px; }
.triad { position: absolute; left: 12px; bottom: 42px; width: 56px; height: 56px; }
.triad text { font: 8px "Noto Sans", sans-serif; }
.name { position: absolute; left: 11px; bottom: 1px; font-size: 12px; font-weight: bold; }
.pane {
  position: absolute;
  top: 54px;
  right: 0;
  width: 25px;
  border: 1px solid #858585;
  border-right: 0;
}
.pane button {
  width: 24px;
  height: 24px;
  display: grid;
  place-items: center;
  background: #d5d5d5;
  border-bottom: 1px solid #858585;
}
.pane button:last-child { border-bottom: 0; height: 23px; }
.pane .on { background: #f9f9f9; }

.bottom { display: flex; background: #f7f7f7; border-top: 1px solid #858585; overflow: hidden; }
.edge { width: 28px; border-right: 1px solid #999; border-left: 2px solid #8fb0b5; }
.bottom button { width: 132px; padding-right: 8px; background: #d5d5d5; border-right: 1px solid #999; line-height: 15px; }
.bottom .on { width: 60px; padding: 0; background: #f9f9f9; font-weight: bold; font-size: 12px; }
```
